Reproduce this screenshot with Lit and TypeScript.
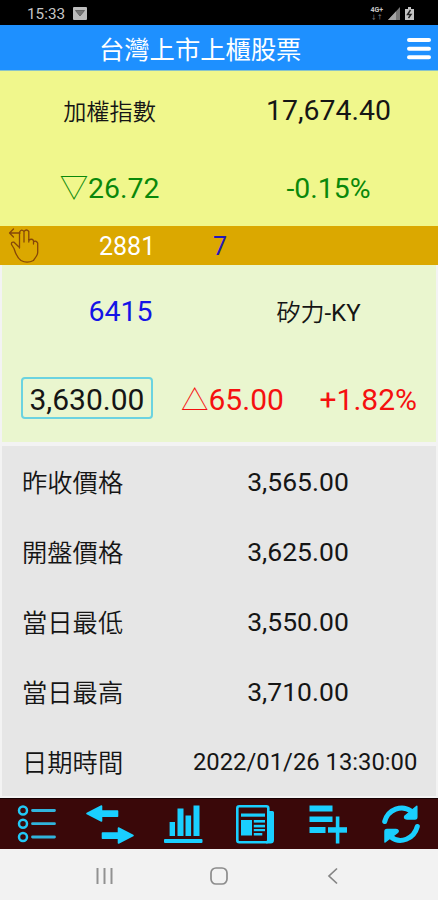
import { LitElement, html, css, svg } from "lit";
import { customElement } from "lit/decorators.js";

const ROWS = [
  ["昨收價格", "3,565.00"],
  ["開盤價格", "3,625.00"],
  ["當日最低", "3,550.00"],
  ["當日最高", "3,710.00"],
];

const listIcon = svg`
  <g fill="none" stroke="#31b4dc" stroke-width="2.8">
    <g stroke="#22c8f5" stroke-width="2.5"><circle cx="5" cy="6.5" r="4"/><circle cx="5" cy="19.7" r="4"/><circle cx="5" cy="33" r="4"/></g>
    <path stroke-linecap="round" d="M14.5 6.5H36.5M14.5 19.7H36.5M14.5 33H36.5"/>
  </g>`;
const swapIcon = svg`
  <g fill="#1acfff" stroke="#1acfff" stroke-width="1.6" stroke-linejoin="round">
    <path d="M-4 9.5L10.500 2V7H26.500V12.200H10.500V17Z"/><path d="M42 31.500L27.500 24V29H11.500V34.200H27.500V39Z"/>
  </g>`;
const chartIcon = svg`
  <g fill="#1acfff">
    <rect x="5.600" y="18" width="5.400" height="14"/><rect x="13.500" y="4.500" width="6" height="27.500"/>
    <rect x="21.500" y="11.500" width="5.600" height="20.500"/><rect x="29.500" y="1.500" width="6" height="30.500"/>
    <rect x="0" y="35" width="38.500" height="4" rx="1"/>
  </g>`;
const newsIcon = svg`
  <rect x="1.300" y="2.300" width="31" height="36" rx="2" fill="none" stroke="#1acfff" stroke-width="2.600"/>
  <path fill="#1acfff" d="M31 7H36.500Q38 7 38 8.500V36Q38 39.600 34.500 39.600H30Q31 38 31 36Z"/>
  <g fill="#1acfff"><rect x="5" y="9.500" width="24" height="3.200"/><rect x="5" y="16" width="11" height="15.500"/>
  <rect x="17.800" y="16" width="11.200" height="2.600"/><rect x="17.800" y="20.800" width="11.200" height="2.600"/>
  <rect x="17.800" y="25" width="11.200" height="2.200"/><rect x="17.800" y="29" width="8.500" height="2.500"/></g>`;
const addIcon = svg`
  <g fill="#1acfff"><rect x="0.500" y="1.500" width="23" height="6"/><rect x="0.500" y="12.500" width="23" height="5.500"/>
  <rect x="0.500" y="23" width="16" height="6"/><rect x="19" y="23.200" width="19" height="5.500"/>
  <rect x="26.800" y="12.500" width="3.600" height="27"/></g>`;
const syncIcon = svg`
  <g fill="none" stroke="#1acfff" stroke-width="5">
    <path stroke-linecap="round" d="M2.700 17.500C6 5 20 0.500 29 7"/><path stroke-linecap="round" d="M35.300 22.500C32 35 18 40.500 9 33"/>
  </g>
  <g fill="#1acfff" stroke="#1acfff" stroke-width="1.500" stroke-linejoin="round">
    <path d="M34.800 2.300V13Q34.800 15 33 15H25Q21.500 14.500 23 12L34.800 2.300Z"/><path d="M3 38V27.500Q3 25.600 5 25.600H14Q17.500 26 15.500 28.500Z"/>
  </g>`;

@customElement("app-root")
export class AppRoot extends LitElement {
  static styles = css`
    :host {
      display: flex; flex-direction: column; width: 438px; height: 900px; overflow: hidden;
      background: #f3f3f3; color: #151515; line-height: 1; white-space: nowrap;
      font-family: Roboto, "Noto Sans CJK TC", sans-serif;
    }
    svg { display: block; overflow: visible; flex: none; }
    .status { height: 25px; background: #000; color: #c6c6c6; display: flex; align-items: center; padding: 4px 24px 0 27px; box-sizing: border-box; font-size: 15.300px; }
    .status .mail { margin-left: 8px; margin-bottom: 2px; }
    .status .right { margin-left: auto; display: flex; align-items: center; gap: 5px; margin-bottom: 2px; }
    .net { display: flex; flex-direction: column; align-items: center; font-size: 7px; font-weight: 700; }
    .net small { font-size: 6px; color: #777; line-height: 6px; }
    .title { height: 46px; background: #1e90ff; color: #fff; display: flex; align-items: center; justify-content: space-between; padding: 4px 7px 0 99px; box-sizing: border-box; font-size: 25.300px; border-bottom: 1px solid #8bc4c8; }
    .title .name { padding-top: 2px; }
    .title .menu { margin-bottom: 2px; }
    .index { height: 155px; background: #f0f78c; display: grid; grid-template-columns: 1fr 1fr; grid-template-rows: 79px 76px; place-items: center; font-size: 28.400px; box-sizing: border-box; }
    .index .name { font-size: 23.200px; }
    .index .total { padding-top: 1px; }
    .cjk { font-family: "Noto Sans CJK TC DemiLight", "Noto Sans CJK TC", sans-serif; font-weight: 350; }
    .thin { font-weight: 300; }
    .down { color: #0a880a; padding-top: 2px; }
    .up { color: #f5100f; padding-top: 1px; }
    .up .thin { font-size: 27.500px; }
    .code { color: #1414e6; }
    .pick { height: 39px; background: #dba800; display: flex; align-items: center; padding: 1px 0 0 9px; box-sizing: border-box; font-size: 25px; color: #fff; }
    .pick .num { margin-left: 60px; width: 114px; }
    .pick .cnt { color: #2318b8; }
    .stock { height: 177px; margin: 0 2px; background: #eaf6cf; font-size: 30px; display: grid; grid-template-rows: 92px 85px; }
    .head { display: grid; grid-template-columns: 237px 159px; place-items: center; font-size: 28.500px; padding-top: 2px; }
    .head .who { font-size: 24px; padding-bottom: 1px; }
    .quote { display: flex; align-items: center; padding: 0 19px 1px 19px; }
    .quote .change { margin: 0 auto 0 28px; }
    .price { width: 132px; height: 42px; box-sizing: border-box; border: 2px solid #6bd3e0; border-radius: 4px; display: flex; align-items: center; justify-content: center; padding-top: 3px; margin-bottom: 2px; }
    .detail { margin: 4px 2px 2px; height: 350px; background: #e6e6e6; display: grid; grid-template-rows: repeat(5, 70px); padding-top: 1px; box-sizing: border-box; }
    .row { display: grid; grid-template-columns: 162px 228px; align-items: center; padding-left: 20px; font-size: 25.300px; }
    .row .val { font-size: 26.500px; text-align: center; }
    .row .date { font-size: 23.800px; padding: 2px 0 0 9px; }
    .tools { height: 51px; background: #3a0809; display: flex; justify-content: space-between; align-items: center; padding: 0 18px; box-sizing: border-box; border-top: 1px solid #160102; }
    .nav { flex: 1; background: #f2f2f2; display: flex; justify-content: center; align-items: center; gap: 98px; padding: 3px 4px 0 0; }
    .nav .home { margin: 0 2px 0 -1px; }
  `;

  render() {
    const tool = (icon: unknown) => html`<svg width="38" height="40" viewBox="0 0 38 40">${icon}</svg>`;
    return html`
      <div class="status">
        <span>15:33</span>
        <svg class="mail" width="14" height="13" viewBox="0 0 14 13"><rect width="14" height="13" rx="1" fill="#bdbdbd"/><path d="M2.500 3.500H11.500L7 9Z" fill="#777" stroke="#666"/></svg>
        <div class="right">
          <div class="net"><span>4G+</span><small>↓↑</small></div>
          <svg width="12" height="13" viewBox="0 0 12 13"><path d="M0 13L12 0V13Z" fill="#777"/><path d="M0 13L8 4.500V13Z" fill="#a5a5a5"/></svg>
          <svg width="9" height="13" viewBox="0 0 9 13"><path d="M0 2H3V0H6V2H9V13H0Z" fill="#c4c4c4"/><path d="M5.500 3L2.500 7.500H6L3.500 11" fill="none" stroke="#222" stroke-width="1.400"/></svg>
        </div>
      </div>
      <div class="title">
        <span class="name">台灣上市上櫃股票</span>
        <svg class="menu" width="24" height="22" viewBox="0 0 24 22"><path d="M2 2H22M2 10.700H22M2 19.300H22" stroke="#fff" stroke-width="4" stroke-linecap="round"/></svg>
      </div>
      <div class="index">
        <span class="name cjk">加權指數</span><span class="total">17,674.40</span>
        <span class="down"><span class="thin">▽</span>26.72</span><span class="down">-0.15%</span>
      </div>
      <div class="pick">
        <svg width="30" height="36" viewBox="0 0 30 36"><g fill="none" stroke="#854708" stroke-width="1.300" stroke-linejoin="round" stroke-linecap="round">
          <path d="M11 5H0.500M4.500 1L0.500 5L4.500 9"/>
          <path d="M10.500 20V4Q12.500 0.500 15 3.500V14M15 3.500Q17.500 0.500 19.800 3.500V14M19.800 12.500Q22.500 10 24.500 12.500V16M24.500 14Q27 12 28.700 15V24.500C28.500 28 25.500 30.500 24.500 32.500C20 34.800 15.500 34.500 12 32.500C8.500 30 6.500 25.500 5 20.500L2.500 16.500Q2 13.500 5 14.200L10.500 19.500"/></g></svg>
        <span class="num">2881</span><span class="cnt">7</span>
      </div>
      <div class="stock">
        <div class="head"><span class="code">6415</span><span class="who"><span class="cjk">矽力</span>-KY</span></div>
        <div class="quote"><span class="price">3,630.00</span><span class="up change"><span class="thin">△</span>65.00</span><span class="up">+1.82%</span></div>
      </div>
      <div class="detail">
        ${ROWS.map(([k, v]) => html`<div class="row"><span class="cjk">${k}</span><span class="val">${v}</span></div>`)}
        <div class="row"><span class="cjk">日期時間</span><span class="val date">2022/01/26 13:30:00</span></div>
      </div>
      <div class="tools">${[listIcon, swapIcon, chartIcon, newsIcon, addIcon, syncIcon].map(tool)}</div>
      <div class="nav">
        <svg width="17" height="16" viewBox="0 0 17 16"><path d="M1.500 0V16M8.500 0V16M15.500 0V16" stroke="#919191" stroke-width="2"/></svg>
        <svg class="home" width="18" height="18" viewBox="0 0 18 18"><rect x="1" y="1" width="16" height="16" rx="5" fill="none" stroke="#8c8c8c" stroke-width="1.700"/></svg>
        <svg width="10" height="16" viewBox="0 0 10 16"><path d="M9 0.500L1 8L9 15.500" fill="none" stroke="#858585" stroke-width="1.700"/></svg>
      </div>
    `;
  }
}
